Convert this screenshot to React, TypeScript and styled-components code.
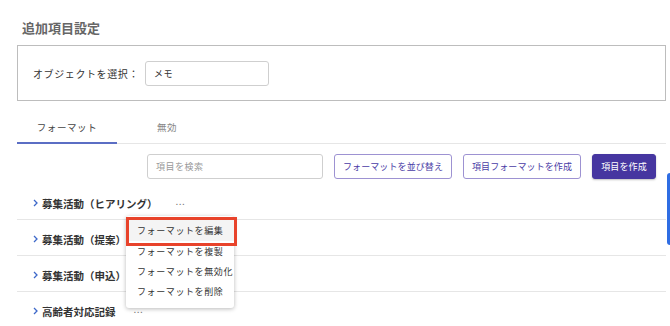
import { styled, createGlobalStyle } from "styled-components";

const GlobalStyle = createGlobalStyle`
  html, body {
    margin: 0;
    padding: 0;
    background: #fff;
    font-family: "Noto Sans CJK JP", "Noto Sans", sans-serif;
    color: #333;
  }
  * { box-sizing: border-box; }
`;

const Page = styled.div`
  position: relative;
  width: 670px;
  height: 326px;
  overflow: hidden;
  padding: 17px 4px 0 17px;
`;

const Title = styled.h1`
  margin: 0 0 0 5px;
  height: 28px;
  line-height: 21px;
  font-size: 13px;
  font-weight: 700;
  color: #666;
`;

const ObjectBox = styled.div`
  height: 56px;
  border: 1px solid #bdbdbd;
  display: flex;
  align-items: center;
  padding-left: 15px;
  gap: 6px;
`;

const Label = styled.span`
  font-size: 10px;
  letter-spacing: 0.6px;
  color: #333;
`;

const TextInput = styled.div<{ $w: number; $placeholder?: boolean }>`
  width: ${(p) => p.$w}px;
  height: 25px;
  border: 1px solid #cfcfcf;
  border-radius: 3px;
  display: flex;
  align-items: center;
  padding-left: 8px;
  font-size: 9px;
  letter-spacing: 0.5px;
  color: ${(p) => (p.$placeholder ? "#999" : "#333")};
`;

const Tabs = styled.div`
  margin-top: 10px;
  display: flex;
  border-bottom: 1px solid #e6e6e6;
`;

const Tab = styled.div<{ $active?: boolean }>`
  width: 100px;
  height: 33px;
  display: flex;
  align-items: center;
  justify-content: center;
  font-size: 9.5px;
  letter-spacing: 0.6px;
  color: ${(p) => (p.$active ? "#444" : "#888")};
  border-bottom: 2px solid ${(p) => (p.$active ? "#5b6ec4" : "transparent")};
  margin-bottom: -1px;
`;

const Toolbar = styled.div`
  margin-top: 10px;
  display: flex;
  justify-content: flex-end;
  gap: 11px;
  padding-right: 10px;
`;

const Button = styled.div<{ $primary?: boolean; $w: number }>`
  width: ${(p) => p.$w}px;
  height: 25px;
  display: flex;
  align-items: center;
  justify-content: center;
  border-radius: 3px;
  font-size: 9px;
  letter-spacing: 0.1px;
  border: 1px solid ${(p) => (p.$primary ? "#4636a0" : "#9d92d2")};
  background: ${(p) => (p.$primary ? "#4636a0" : "#fff")};
  color: ${(p) => (p.$primary ? "#fff" : "#4a3ca6")};
  box-shadow: ${(p) => (p.$primary ? "0 1px 2px rgba(0,0,0,0.25)" : "none")};
`;

const List = styled.div`
  margin-top: 5px;
`;

const Row = styled.div`
  height: 36px;
  display: flex;
  align-items: center;
  padding: 3px 0 0 16px;
  border-bottom: 1px solid #e6e6e6;
`;

const Chevron = styled.svg`
  width: 5px;
  height: 8px;
  margin-right: 4px;
`;

const RowName = styled.span`
  font-size: 10.5px;
  font-weight: 700;
  color: #333;
`;

const Dots = styled.span`
  margin-left: 18px;
  font-size: 10px;
  color: #777;
  letter-spacing: 0.5px;
  line-height: 1;
  padding-bottom: 4px;
`;

const Menu = styled.div`
  position: absolute;
  left: 126px;
  top: 216px;
  width: 108px;
  height: 92px;
  background: #fff;
  border-radius: 3px;
  box-shadow: 0 1px 4px rgba(0, 0, 0, 0.28);
  padding-top: 2px;
`;

const MenuItem = styled.div<{ $selected?: boolean }>`
  position: relative;
  height: ${(p) => (p.$selected ? 23 : 20)}px;
  padding-left: 11px;
  padding-top: ${(p) => (p.$selected ? 2 : 0)}px;
  display: flex;
  align-items: center;
  font-size: 9px;
  letter-spacing: 0.6px;
  color: #333;
  background: ${(p) => (p.$selected ? "#f4f4f4" : "transparent")};
  ${(p) =>
    p.$selected &&
    `
    &::after {
      content: "";
      position: absolute;
      left: 0;
      right: -3px;
      top: -1px;
      bottom: -5px;
      border: 3px solid #e8432b;
    }
  `}
`;

const SideTab = styled.div`
  position: absolute;
  right: 0;
  top: 173px;
  width: 3px;
  height: 72px;
  background: #2f6de3;
  border-radius: 3px 0 0 3px;
`;

const rows = ["募集活動（ヒアリング）", "募集活動（提案）", "募集活動（申込）", "高齢者対応記録"];
const menuItems = ["フォーマットを編集", "フォーマットを複製", "フォーマットを無効化", "フォーマットを削除"];

export default function App() {
  return <>
    <GlobalStyle/>
    <Page>
      <Title>追加項目設定</Title>
      <ObjectBox>
        <Label>オブジェクトを選択：</Label>
        <TextInput $w={124}>メモ</TextInput>
      </ObjectBox>
      <Tabs>
        <Tab $active>フォーマット</Tab>
        <Tab>無効</Tab>
      </Tabs>
      <Toolbar>
        <TextInput $w={176} $placeholder>項目を検索</TextInput>
        <Button $w={118}>フォーマットを並び替え</Button>
        <Button $w={118}>項目フォーマットを作成</Button>
        <Button $w={64} $primary>項目を作成</Button>
      </Toolbar>
      <List>
        {rows.map((name) => (
          <Row key={name}>
            <Chevron viewBox="0 0 5 8">
              <polyline points="1,1 4,4 1,7" fill="none" stroke="#3d68c9" strokeWidth="1.3"/>
            </Chevron>
            <RowName>{name}</RowName>
            <Dots>...</Dots>
          </Row>
        ))}
      </List>
      <Menu>
        {menuItems.map((item, i) => (
          <MenuItem key={item} $selected={i === 0}>{item}</MenuItem>
        ))}
      </Menu>
      <SideTab/>
    </Page>
  </>;
}
